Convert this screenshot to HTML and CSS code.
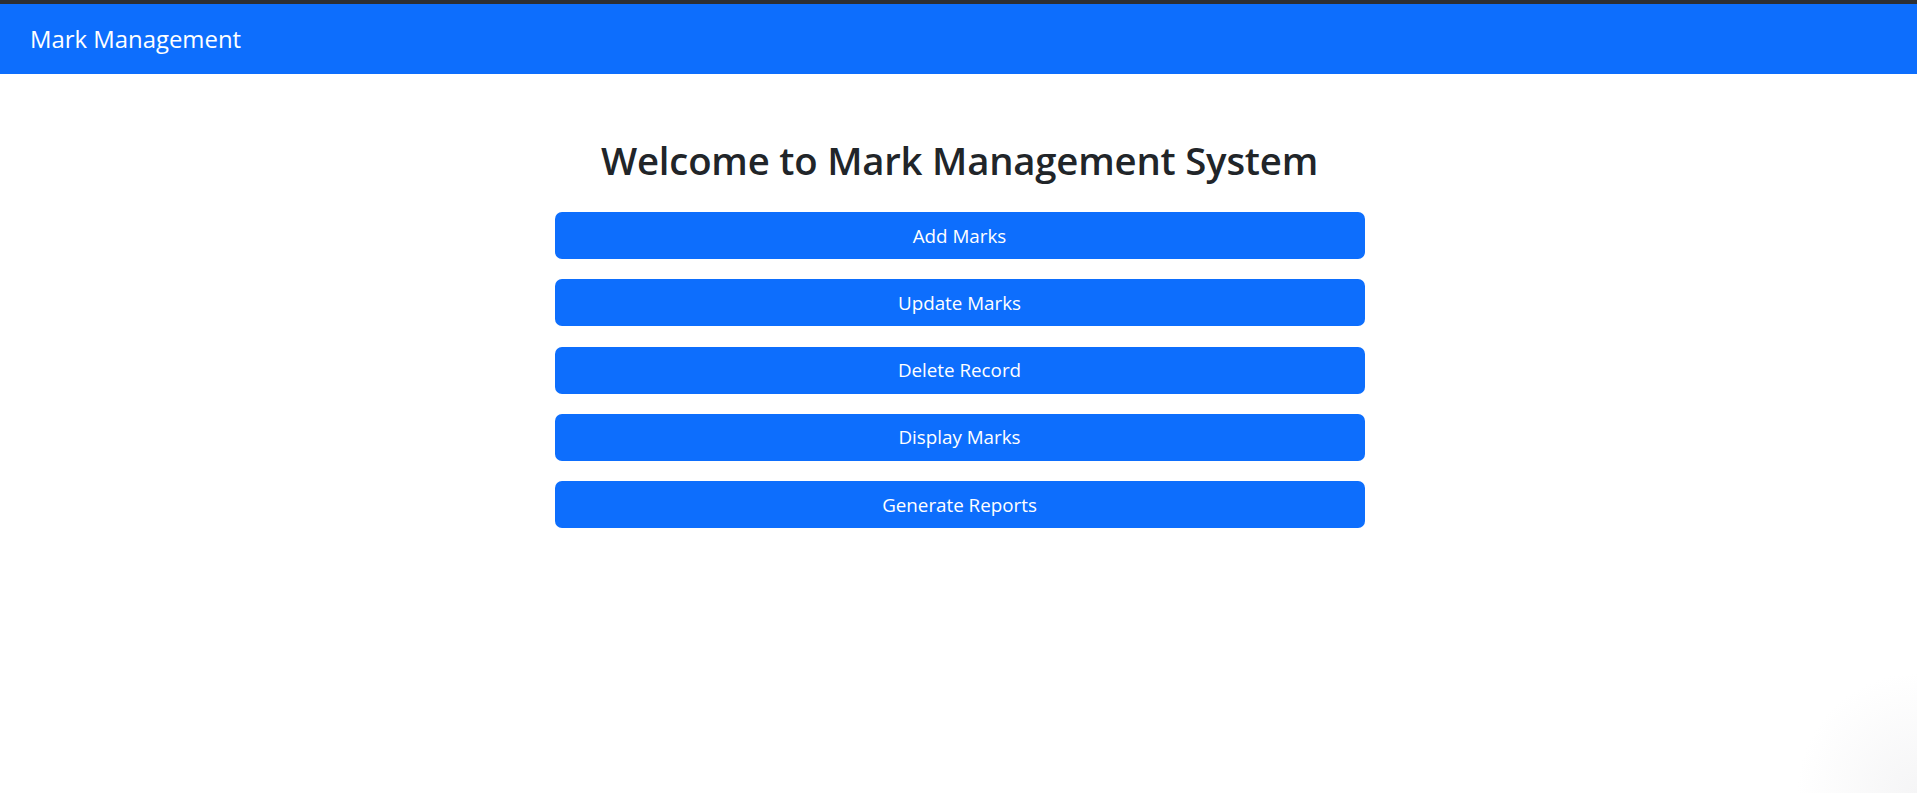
FILE: index.html
```html
<!DOCTYPE html>
<html lang="en">
<head>
<meta charset="utf-8">
<title>Mark Management</title>
<link rel="stylesheet" href="styles.css">
</head>
<body>
<div class="topstrip"></div>
<nav class="navbar">
  <a class="brand" href="#">Mark Management</a>
</nav>
<main class="main">
  <h2 class="title">Welcome to Mark Management System</h2>
  <div class="actions">
    <button class="btn">Add Marks</button>
    <button class="btn">Update Marks</button>
    <button class="btn">Delete Record</button>
    <button class="btn">Display Marks</button>
    <button class="btn">Generate Reports</button>
  </div>
</main>
</body>
</html>
```
FILE: styles.css
```css
html, body {
  margin: 0;
  padding: 0;
}
body {
  height: 793px;
  overflow: hidden;
  font-family: "Open Sans", "Noto Sans", "Liberation Sans", sans-serif;
  color: #212529;
  background: radial-gradient(circle at 100% 100%, #f5f5f6 0, #ffffff 120px);
}
.topstrip {
  height: 4px;
  background: #2d2f33;
}
.navbar {
  height: 70px;
  background: #0d6efd;
  display: flex;
  align-items: center;
  padding-left: 30px;
}
.brand {
  color: #fff;
  text-decoration: none;
  font-size: 23.9px;
  line-height: 30px;
}
.main {
  display: flex;
  flex-direction: column;
  align-items: center;
  padding-top: 62px;
  padding-left: 2px;
}
.title {
  margin: 0 0 28px;
  font-size: 38.3px;
  line-height: 48px;
  font-weight: 600;
  letter-spacing: -0.2px;
  color: #212529;
}
.actions {
  width: 810px;
  display: flex;
  flex-direction: column;
  gap: 20.25px;
}
.btn {
  height: 47px;
  border: 0;
  border-radius: 7px;
  background: #0d6efd;
  color: #fff;
  font-family: inherit;
  font-size: 18.8px;
  padding: 0;
  cursor: pointer;
}
```
